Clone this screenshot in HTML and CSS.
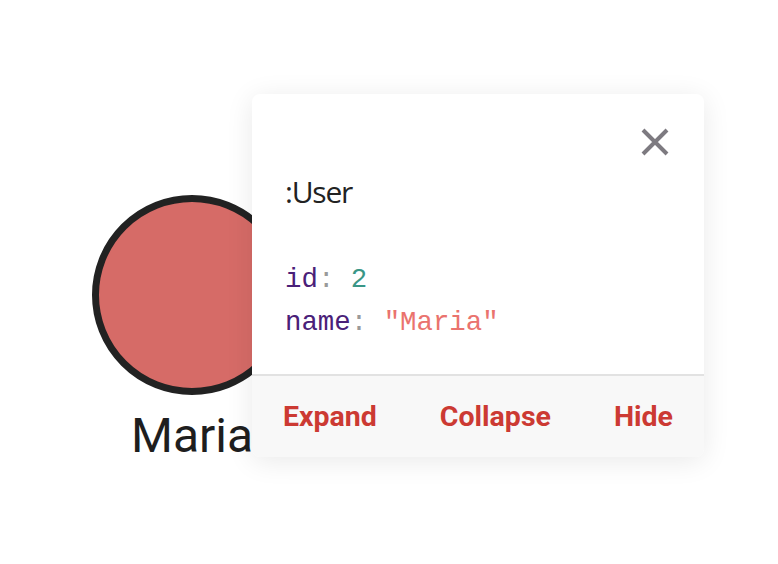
FILE: index.html
```html
<!DOCTYPE html>
<html>
<head>
<meta charset="utf-8">
<link rel="stylesheet" href="styles.css">
</head>
<body>
<div class="canvas">
  <div class="node">
    <div class="circle"></div>
    <div class="label">Maria</div>
  </div>
  <div class="card">
    <div class="card-body">
      <div class="close-row">
        <svg class="close" width="28" height="28" viewBox="0 0 28 28"><path d="M2 2 L26 26 M26 2 L2 26" stroke="#7d7a80" stroke-width="4" fill="none"/></svg>
      </div>
      <div class="title">:User</div>
      <div class="props">
        <div class="prop"><span class="key">id</span><span class="colon">:</span> <span class="num">2</span></div>
        <div class="prop"><span class="key">name</span><span class="colon">:</span> <span class="str">"Maria"</span></div>
      </div>
    </div>
    <div class="card-footer">
      <span class="action">Expand</span>
      <span class="action">Collapse</span>
      <span class="action">Hide</span>
    </div>
  </div>
</div>
</body>
</html>
```
FILE: styles.css
```css
html, body {
  margin: 0;
  padding: 0;
  background: #ffffff;
}
.canvas {
  position: relative;
  width: 778px;
  height: 564px;
  overflow: hidden;
}
.node {
  position: absolute;
  left: 92px;
  top: 195px;
  width: 200px;
  display: flex;
  flex-direction: column;
  align-items: center;
}
.circle {
  width: 200px;
  height: 200px;
  box-sizing: border-box;
  border-radius: 50%;
  border: 7px solid #222222;
  background: #d66b67;
}
.label {
  margin-top: 17px;
  font-family: Roboto, "Liberation Sans", sans-serif;
  font-size: 48px;
  line-height: 48px;
  color: #1e1e1e;
}
.card {
  position: absolute;
  left: 252px;
  top: 94px;
  width: 452px;
  height: 363px;
  background: #ffffff;
  border-radius: 8px;
  box-shadow: 0 4px 28px rgba(0, 0, 0, 0.09);
  display: flex;
  flex-direction: column;
  overflow: hidden;
}
.card-body {
  flex: 1;
  padding: 34px 35px 0 33px;
}
.close-row {
  display: flex;
  justify-content: flex-end;
}
.close {
  display: block;
}
.title {
  margin-top: 16px;
  font-family: "Open Sans", "Noto Sans", sans-serif;
  font-size: 30px;
  line-height: 40px;
  letter-spacing: -1.2px;
  color: #222222;
}
.props {
  margin-top: 46px;
  font-family: "Liberation Mono", "Courier New", monospace;
  font-size: 27.4px;
  line-height: 43px;
}
.key { color: #4a2078; }
.colon { color: #9a9a9a; }
.num { color: #3a9686; }
.str { color: #ea736e; }
.card-footer {
  height: 81px;
  border-top: 2px solid #e2e2e2;
  background: #f8f8f8;
  display: flex;
  align-items: center;
  justify-content: space-between;
  padding: 0 31px;
}
.action {
  font-family: Roboto, "Liberation Sans", sans-serif;
  font-weight: 700;
  font-size: 28.5px;
  color: #cc3a33;
}
```
